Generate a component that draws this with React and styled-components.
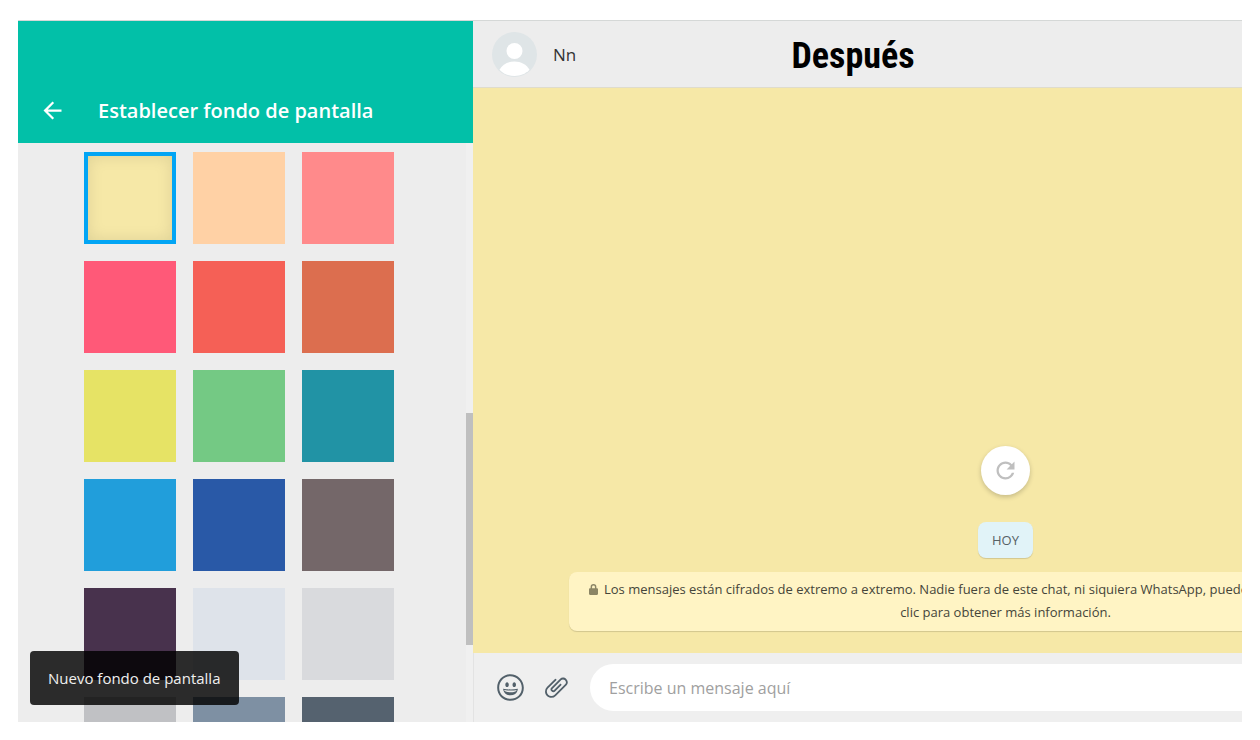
import { useState } from "react";
import styled, { createGlobalStyle } from "styled-components";

const wallpapers = [
  { name: "Amarillo", color: "#f6e8a7" },
  { name: "Durazno", color: "#ffd1a5" },
  { name: "Salmón", color: "#ff8a8b" },
  { name: "Rosa", color: "#ff5978" },
  { name: "Rojo", color: "#f56056" },
  { name: "Terracota", color: "#dc6e4f" },
  { name: "Lima", color: "#e6e365" },
  { name: "Verde", color: "#74c984" },
  { name: "Turquesa", color: "#2193a5" },
  { name: "Celeste", color: "#219edb" },
  { name: "Azul", color: "#2959a7" },
  { name: "Marrón", color: "#746769" },
  { name: "Violeta", color: "#48324d" },
  { name: "Lavanda", color: "#dee3ea" },
  { name: "Gris claro", color: "#d9dadd" },
  { name: "Gris", color: "#c0c1c4" },
  { name: "Azul grisáceo", color: "#7e90a3" },
  { name: "Pizarra", color: "#55626f" },
];

const Icon = ({ size, d }) => (
  <svg viewBox="0 0 24 24" width={size} height={size} aria-hidden="true">
    <path fill="currentColor" d={d} />
  </svg>
);

const icons = {
  back: "M12 4l1.4 1.4L7.8 11H20v2H7.8l5.6 5.6L12 20l-8-8 8-8z",
  refresh:
    "M17.6 6.4C16.2 4.9 14.2 4 12 4c-4.4 0-8 3.6-8 8s3.6 8 8 8c3.7 0 6.8-2.6 7.7-6h-2.1c-.8 2.3-3 4-5.6 4-3.3 0-6-2.7-6-6s2.7-6 6-6c1.7 0 3.1.7 4.2 1.8L13 11h7V4l-2.4 2.4z",
  smiley:
    "M9.153 11.603c.795 0 1.439-.879 1.439-1.962s-.644-1.962-1.439-1.962-1.439.879-1.439 1.962.644 1.962 1.439 1.962zm-3.204 1.362c-.026-.307-.131 5.218 6.063 5.551 6.066-.25 6.066-5.551 6.066-5.551-6.078 1.416-12.129 0-12.129 0zm11.363 1.108s-.669 1.959-5.051 1.959c-3.505 0-5.388-1.164-5.607-1.959 0 0 5.912 1.055 10.658 0zM11.804 1.011C5.609 1.011.978 6.033.978 12.228s4.826 10.761 11.021 10.761S23.02 18.423 23.02 12.228c.001-6.195-5.021-11.217-11.216-11.217zM12 21.354c-5.273 0-9.381-3.886-9.381-9.159s3.942-9.548 9.215-9.548 9.548 4.275 9.548 9.548c-.001 5.272-4.109 9.159-9.382 9.159zm3.108-9.751c.795 0 1.439-.879 1.439-1.962s-.644-1.962-1.439-1.962-1.439.879-1.439 1.962.644 1.962 1.439 1.962z",
  clip: "M1.816 15.556v.002c0 1.502.584 2.912 1.646 3.972s2.472 1.647 3.974 1.647a5.58 5.58 0 0 0 3.972-1.645l9.547-9.548c.769-.768 1.147-1.767 1.058-2.817-.079-.968-.548-1.927-1.319-2.698-1.594-1.592-4.068-1.711-5.517-.262l-7.916 7.915c-.881.881-.792 2.25.214 3.261.959.958 2.423 1.053 3.263.215l5.511-5.512c.28-.28.267-.722.053-.936l-.244-.244c-.191-.191-.567-.349-.957.04l-5.506 5.506c-.18.18-.635.127-.976-.214-.098-.097-.576-.613-.213-.973l7.915-7.917c.818-.817 2.267-.699 3.23.262.5.501.802 1.1.849 1.685.051.573-.156 1.111-.589 1.543l-9.547 9.549a3.97 3.97 0 0 1-2.829 1.171 3.975 3.975 0 0 1-2.83-1.173 3.973 3.973 0 0 1-1.172-2.828c0-1.071.415-2.076 1.172-2.83l7.209-7.211c.157-.157.264-.579.028-.814L11.5 4.36a.572.572 0 0 0-.834.018l-7.205 7.207a5.577 5.577 0 0 0-1.645 3.971z",
};

const Avatar = () => (
  <svg viewBox="0 0 45 45" width="45" height="45" aria-hidden="true">
    <circle cx="22.5" cy="22.5" r="22.5" fill="#dfe5e7" />
    <circle cx="22.5" cy="19" r="8" fill="#fff" />
    <path
      fill="#fff"
      d="M7.5 37.8C10.4 32.500 16 29.500 22.500 29.500s12.100 3 15 8.300C33.800 41.700 28.500 44 22.500 44S11.200 41.700 7.500 37.800z"
    />
  </svg>
);

const Lock = () => (
  <svg viewBox="0 0 10 12" width="9" height="11" aria-hidden="true">
    <path
      fill="#8b8565"
      d="M5 0a3.200 3.200 0 0 0-3.200 3.200V4.500H1.200C.5 4.500 0 5 0 5.700v5.100C0 11.500.5 12 1.200 12h7.600c.7 0 1.200-.5 1.200-1.200V5.700C10 5 9.500 4.500 8.800 4.500h-.6V3.200A3.200 3.200 0 0 0 5 0zM3.400 4.500V3.200a1.600 1.600 0 0 1 3.200 0V4.500z"
    />
  </svg>
);

const App = () => {
  const [selected, setSelected] = useState("Amarillo");
  const wallpaper = wallpapers.find((item) => item.name === selected);

  return (
    <>
      <GlobalStyle />
      <Page>
        <Window>
          <Sidebar>
            <SidebarHeader>
              <IconButton aria-label="Volver">
                <Icon size={27} d={icons.back} />
              </IconButton>
              <Title>Establecer fondo de pantalla</Title>
            </SidebarHeader>
            <SidebarBody>
              <SwatchGrid>
                {wallpapers.map(({ name, color }) => (
                  <Swatch
                    key={name}
                    type="radio"
                    name="wallpaper"
                    aria-label={name}
                    $color={color}
                    checked={name === selected}
                    onChange={() => setSelected(name)}
                  />
                ))}
              </SwatchGrid>
              <ScrollTrack>
                <ScrollThumb />
              </ScrollTrack>
            </SidebarBody>
            <Toast role="status">Nuevo fondo de pantalla</Toast>
          </Sidebar>

          <Chat>
            <ChatHeader>
              <Contact>
                <Avatar />
                <span>Nn</span>
              </Contact>
              <Caption>Después</Caption>
            </ChatHeader>
            <Messages $color={wallpaper.color}>
              <RefreshButton aria-label="Cargar mensajes anteriores">
                <Icon size={27} d={icons.refresh} />
              </RefreshButton>
              <DayBadge>HOY</DayBadge>
              <Notice>
                <NoticeLead>
                  <Lock />
                  Los mensajes están cifrados de extremo a extremo. Nadie fuera
                  de este chat, ni siquiera WhatsApp, puede leerlos ni
                  escucharlos. Haz
                </NoticeLead>
                clic para obtener más información.
              </Notice>
            </Messages>
            <Composer>
              <IconButton aria-label="Emojis">
                <Icon size={29} d={icons.smiley} />
              </IconButton>
              <IconButton aria-label="Adjuntar">
                <Icon size={27} d={icons.clip} />
              </IconButton>
              <MessageInput
                type="text"
                aria-label="Mensaje"
                placeholder="Escribe un mensaje aquí"
              />
            </Composer>
          </Chat>
        </Window>
      </Page>
    </>
  );
};

const GlobalStyle = createGlobalStyle`
  * {
    box-sizing: border-box;
  }
  body {
    margin: 0;
    background: #fff;
    font-family: "Segoe UI", "Open Sans", "Noto Sans", sans-serif;
  }
  button,
  input {
    margin: 0;
    border: 0;
    font-family: inherit;
  }
  svg {
    display: block;
  }
`;

const Page = styled.div`
  height: 100vh;
  padding: 20px 18px 18px;
`;

const Window = styled.main`
  display: flex;
  height: 100%;
  border-top: 1px solid #d5d8d7;
  overflow: hidden;
`;

const Sidebar = styled.aside`
  position: relative;
  display: flex;
  flex-direction: column;
  flex: 0 0 455px;
  background: #ededed;
`;

const SidebarHeader = styled.header`
  display: flex;
  align-items: flex-end;
  gap: 32px;
  height: 122px;
  padding: 0 21px 19px;
  background: #02c0a8;
  color: #fff;
`;

const Title = styled.h1`
  margin: 0;
  font-size: 20px;
  font-weight: 600;
  line-height: 27px;
`;

const IconButton = styled.button`
  padding: 0;
  background: none;
  color: inherit;
  cursor: pointer;
`;

const SidebarBody = styled.div`
  display: flex;
  flex: 1;
  min-height: 0;
`;

const SwatchGrid = styled.div`
  display: grid;
  grid-template-columns: repeat(3, 92px);
  grid-auto-rows: 92px;
  gap: 17px;
  flex: 1;
  padding: 9px 0 0 66px;
  overflow: hidden;
`;

const Swatch = styled.input`
  appearance: none;
  width: 100%;
  height: 100%;
  background: ${({ $color }) => $color};
  cursor: pointer;
  &:checked {
    border: 4px solid #02a5f4;
    box-shadow: inset 0 0 16px rgba(0, 0, 0, 0.1);
  }
`;

const ScrollTrack = styled.div`
  display: grid;
  grid-template-rows: 7fr 6fr 2fr;
  width: 7px;
  background: #f0f0f0;
`;

const ScrollThumb = styled.div`
  grid-row: 2;
  background: #bfbfbf;
`;

const Toast = styled.div`
  position: absolute;
  left: 12px;
  bottom: 17px;
  padding: 0 18px;
  border-radius: 4px;
  background: rgba(0, 0, 0, 0.82);
  color: #f0f0f0;
  font-size: 15px;
  line-height: 54px;
`;

const Chat = styled.section`
  display: flex;
  flex-direction: column;
  flex: 1;
  min-width: 0;
  overflow: hidden;
`;

const ChatHeader = styled.header`
  display: grid;
  grid-template-columns: 1fr auto 1fr;
  align-items: center;
  height: 67px;
  padding: 0 28px 0 19px;
  background: #ededed;
  border-bottom: 1px solid #dfdccc;
`;

const Contact = styled.div`
  display: flex;
  align-items: center;
  gap: 16px;
  color: #333;
  font-size: 17px;
`;

const Caption = styled.h2`
  margin: 0;
  padding-top: 4px;
  color: #000;
  font-family: "Roboto Condensed", Roboto, sans-serif;
  font-size: 36px;
  font-weight: 700;
`;

const Messages = styled.div`
  display: flex;
  flex-direction: column;
  align-items: center;
  justify-content: flex-end;
  flex: 1;
  min-width: 1065px;
  padding: 0 96px 22px;
  background: ${({ $color }) => $color};
`;

const RefreshButton = styled.button`
  display: grid;
  place-items: center;
  width: 49px;
  height: 49px;
  margin-bottom: 27px;
  border-radius: 50%;
  background: #fff;
  color: #bfbfbf;
  box-shadow: 0 2px 5px rgba(0, 0, 0, 0.2);
  cursor: pointer;
`;

const DayBadge = styled.div`
  margin-bottom: 14px;
  padding: 0 14px;
  border-radius: 8px;
  background: #e1f3f8;
  color: #566165;
  font-size: 13px;
  line-height: 36px;
  box-shadow: 0 1px 1px rgba(0, 0, 0, 0.15);
`;

const Notice = styled.p`
  width: 100%;
  margin: 0;
  padding: 6px 20px 7px;
  border-radius: 8px;
  background: #fff4c4;
  color: #45453a;
  font-size: 13px;
  line-height: 23px;
  text-align: center;
  box-shadow: 0 1px 1px rgba(0, 0, 0, 0.15);
`;

const NoticeLead = styled.span`
  display: flex;
  align-items: center;
  gap: 6px;
  white-space: nowrap;
`;

const Composer = styled.footer`
  display: flex;
  align-items: center;
  gap: 18px;
  height: 69px;
  min-width: 1065px;
  padding: 0 22px;
  background: #efefef;
  border-left: 1px solid #e3e3e3;
  color: #52606a;
`;

const MessageInput = styled.input`
  flex: 1;
  height: 47px;
  margin-left: 2px;
  padding: 0 19px;
  border-radius: 24px;
  background: #fff;
  color: #333;
  font-size: 16px;
  outline: none;
  &::placeholder {
    color: #a0a0a0;
    opacity: 1;
  }
`;

export default App;
